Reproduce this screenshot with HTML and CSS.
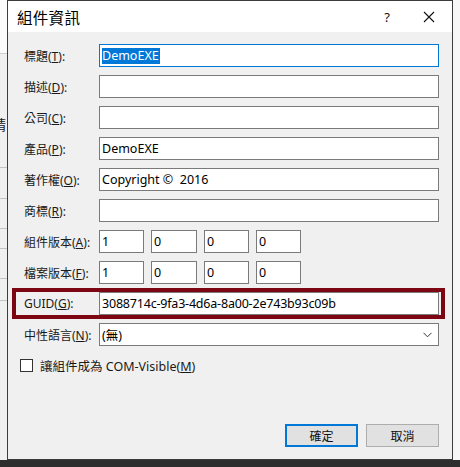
FILE: index.html
```html
<!DOCTYPE html>
<html lang="zh-Hant">
<head>
<meta charset="utf-8">
<title>組件資訊</title>
<link rel="stylesheet" href="styles.css">
</head>
<body>
<div class="screen">
  <div class="main">
    <div class="behind">
      <div class="behind-top"></div>
      <div class="behind-rest">
        <span class="behind-char">請</span>
        <div class="bline l1"></div>
        <div class="bline l2"></div>
        <div class="bline l3"></div>
        <div class="bline l4"></div>
        <div class="bline l5"></div>
        <div class="bline l6"></div>
      </div>
    </div>
    <div class="dialog">
      <div class="titlebar">
        <div class="title">組件資訊</div>
        <div class="tb-help">?</div>
        <div class="tb-close">
          <svg width="12" height="12" viewBox="0 0 12 12"><path d="M1 1L11 11M11 1L1 11" stroke="#111" stroke-width="1.1" fill="none"/></svg>
        </div>
      </div>
      <div class="body">
        <div class="form">
          <div class="row">
            <label class="lbl">標題(<u>T</u>):</label>
            <div class="input focus"><span class="sel">DemoEXE</span></div>
          </div>
          <div class="row">
            <label class="lbl">描述(<u>D</u>):</label>
            <div class="input"></div>
          </div>
          <div class="row">
            <label class="lbl">公司(<u>C</u>):</label>
            <div class="input"></div>
          </div>
          <div class="row">
            <label class="lbl">產品(<u>P</u>):</label>
            <div class="input">DemoEXE</div>
          </div>
          <div class="row">
            <label class="lbl">著作權(<u>O</u>):</label>
            <div class="input pre">Copyright ©  2016</div>
          </div>
          <div class="row">
            <label class="lbl">商標(<u>R</u>):</label>
            <div class="input"></div>
          </div>
          <div class="row">
            <label class="lbl">組件版本(<u>A</u>):</label>
            <div class="vers">
              <div class="input v">1</div>
              <div class="input v">0</div>
              <div class="input v">0</div>
              <div class="input v">0</div>
            </div>
          </div>
          <div class="row">
            <label class="lbl">檔案版本(<u>F</u>):</label>
            <div class="vers">
              <div class="input v">1</div>
              <div class="input v">0</div>
              <div class="input v">0</div>
              <div class="input v">0</div>
            </div>
          </div>
          <div class="row guid">
            <label class="lbl">GUID(<u>G</u>):</label>
            <div class="input guid-val">3088714c-9fa3-4d6a-8a00-2e743b93c09b</div>
            <div class="highlight"></div>
          </div>
          <div class="row">
            <label class="lbl">中性語言(<u>N</u>):</label>
            <div class="input combo">
              <span>(無)</span>
              <svg class="chev" width="9" height="6" viewBox="0 0 9 6"><path d="M0.5 0.8L4.5 4.8L8.5 0.8" stroke="#333" stroke-width="1" fill="none"/></svg>
            </div>
          </div>
        </div>
        <div class="check">
          <span class="box"></span>
          <span class="check-lbl">讓組件成為 COM-Visible(<u>M</u>)</span>
        </div>
        <div class="spacer"></div>
        <div class="buttons">
          <div class="btn default">確定</div>
          <div class="btn">取消</div>
        </div>
      </div>
    </div>
    <div class="right-strip"></div>
  </div>
  <div class="taskbar"></div>
</div>
</body>
</html>
```
FILE: styles.css
```css
html, body {
  margin: 0;
  padding: 0;
}
body {
  width: 460px;
  height: 467px;
  overflow: hidden;
  font-family: "Noto Sans", "Noto Sans CJK TC", sans-serif;
  font-size: 12px;
  color: #000;
  background: #f0f0f0;
}
.screen {
  width: 460px;
  height: 467px;
  display: flex;
  flex-direction: column;
}
.main {
  display: flex;
  height: 460px;
}
.behind {
  width: 7px;
  display: flex;
  flex-direction: column;
  overflow: hidden;
}
.behind-top {
  height: 53px;
  background: #fbfbfb;
  border-bottom: 1px solid #cfcfcf;
}
.behind-rest {
  flex: 1;
  position: relative;
  background: #f0f0f0;
}
.behind-char {
  position: absolute;
  left: -8px;
  top: 62px;
  font-family: "Noto Sans CJK TC", sans-serif;
  font-size: 14px;
  line-height: 16px;
  color: #222;
}
.bline {
  position: absolute;
  left: 0;
  right: 0;
  height: 1px;
  background: #c4c4c4;
}
.l1 { top: 113px; }
.l2 { top: 144px; }
.l3 { top: 174px; }
.l4 { top: 194px; }
.l5 { top: 224px; }
.l6 { top: 246px; }
.dialog {
  width: 444px;
  border: 1px solid #3c3c3c;
  background: #f0f0f0;
  display: flex;
  flex-direction: column;
}
.right-strip {
  flex: 1;
  background: #f7f7f7;
}
.taskbar {
  height: 7px;
  background: #2d2d2d;
}
.titlebar {
  height: 31px;
  background: #fff;
  display: flex;
  align-items: center;
}
.title {
  font-family: "Noto Sans CJK TC", sans-serif;
  font-size: 15.5px;
  padding-left: 9px;
  flex: 1;
  letter-spacing: 0.3px;
  color: #000;
}
.tb-help {
  font-size: 13px;
  width: 20px;
  text-align: center;
  margin-right: 26px;
  color: #111;
}
.tb-close {
  width: 12px;
  height: 12px;
  margin-right: 17px;
  display: flex;
}
.body {
  flex: 1;
  display: flex;
  flex-direction: column;
  padding: 12px 13px 12px 12px;
}
.form {
  display: flex;
  flex-direction: column;
  gap: 8px;
  padding-left: 4px;
}
.row {
  display: flex;
  align-items: center;
  height: 23px;
  position: relative;
}
.lbl {
  width: 75px;
  flex: none;
  color: #1a1a1a;
  white-space: nowrap;
}
.lbl u, .check-lbl u {
  text-underline-offset: 1px;
}
.input {
  box-sizing: border-box;
  width: 341px;
  height: 23px;
  border: 1px solid #7a7a7a;
  background: #fff;
  padding-left: 2px;
  display: flex;
  align-items: center;
  font-size: 12.5px;
  color: #000;
  white-space: nowrap;
  overflow: hidden;
}
.input.pre {
  white-space: pre;
}
.input.guid-val {
  letter-spacing: -0.2px;
}
.input.focus {
  border-color: #0078d7;
}
.sel {
  background: #0078d7;
  color: #fff;
  line-height: 16px;
  padding: 0 1px 0 0;
}
.vers {
  display: flex;
  gap: 7px;
}
.input.v {
  width: 45px;
}
.vers .input.v:nth-child(2) {
  width: 46px;
}
.guid .highlight {
  position: absolute;
  left: -12px;
  right: -6px;
  top: -4px;
  bottom: -4px;
  border: 4px solid #7d0613;
  box-sizing: border-box;
  pointer-events: none;
}
.combo {
  justify-content: space-between;
  padding-right: 6px;
}
.chev {
  flex: none;
}
.check {
  display: flex;
  align-items: center;
  margin-top: 12px;
  height: 14px;
}
.box {
  box-sizing: border-box;
  width: 13px;
  height: 13px;
  border: 1px solid #333;
  background: #fff;
  margin-right: 7px;
}
.check-lbl {
  color: #1a1a1a;
  font-size: 12.5px;
}
.spacer {
  flex: 1;
}
.buttons {
  display: flex;
  justify-content: flex-end;
  gap: 8px;
}
.btn {
  box-sizing: border-box;
  width: 73px;
  height: 23px;
  border: 1px solid #adadad;
  background: #e1e1e1;
  display: flex;
  align-items: center;
  justify-content: center;
  font-family: "Noto Sans CJK TC", sans-serif;
  font-size: 12px;
  color: #111;
}
.btn.default {
  border: 2px solid #0078d7;
}
```
